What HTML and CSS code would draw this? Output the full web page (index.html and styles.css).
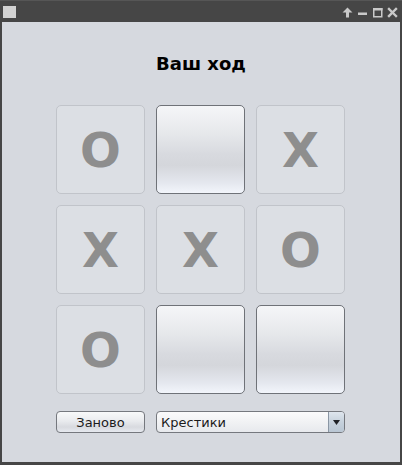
FILE: index.html
```html
<!DOCTYPE html>
<html lang="ru">
<head>
<meta charset="utf-8">
<title>Крестики-нолики</title>
<link rel="stylesheet" href="styles.css">
</head>
<body>
<div class="window">
  <div class="titlebar">
    <div class="app-icon"></div>
    <div class="controls">
      <svg class="ctl" width="11" height="11" viewBox="0 0 11 11"><path d="M5.5 0.5 L10.5 5.5 L7 5.5 L7 10.5 L4 10.5 L4 5.5 L0.5 5.5 Z" fill="#c9c9c9"/></svg>
      <svg class="ctl" width="11" height="11" viewBox="0 0 11 11"><rect x="1" y="5.5" width="9" height="2.5" fill="#c9c9c9"/></svg>
      <svg class="ctl" width="11" height="11" viewBox="0 0 11 11"><rect x="1.75" y="1.75" width="8" height="8" fill="none" stroke="#c9c9c9" stroke-width="1.5"/><rect x="1" y="1" width="9.5" height="2.5" fill="#c9c9c9"/></svg>
      <svg class="ctl" width="11" height="11" viewBox="0 0 11 11"><path d="M2 2 L9 9 M9 2 L2 9" stroke="#c9c9c9" stroke-width="2.4" stroke-linecap="square"/></svg>
    </div>
  </div>
  <div class="content">
    <div class="status">Ваш ход</div>
    <div class="board">
      <button class="cell used" disabled>O</button>
      <button class="cell"></button>
      <button class="cell used" disabled>X</button>
      <button class="cell used" disabled>X</button>
      <button class="cell used" disabled>X</button>
      <button class="cell used" disabled>O</button>
      <button class="cell used" disabled>O</button>
      <button class="cell"></button>
      <button class="cell"></button>
    </div>
    <div class="bottom">
      <button class="btn">Заново</button>
      <div class="combo">
        <span class="combo-text">Крестики</span>
        <span class="combo-arrow"><svg width="7" height="5" viewBox="0 0 7 5"><path d="M0 0 L7 0 L3.5 5 Z" fill="#1e2126"/></svg></span>
      </div>
    </div>
  </div>
</div>
</body>
</html>
```

FILE: styles.css
```css
html, body {
  margin: 0;
  padding: 0;
}
body {
  width: 402px;
  height: 465px;
  overflow: hidden;
  font-family: "DejaVu Sans", "Liberation Sans", sans-serif;
}
.window {
  width: 402px;
  height: 465px;
  box-sizing: border-box;
  background: #464646;
  border-top: 1px solid #565656;
  padding: 0 2px 3px 2px;
  display: flex;
  flex-direction: column;
}
.titlebar {
  height: 21px;
  display: flex;
  align-items: center;
  justify-content: space-between;
  flex: none;
}
.app-icon {
  width: 13px;
  height: 12px;
  background: #d2d2d2;
  margin-left: 1px;
  margin-top: 1px;
}
.controls {
  display: flex;
  gap: 4px;
  margin-right: 2px;
  margin-top: 1px;
}
.ctl {
  display: block;
}
.content {
  flex: 1;
  background: #d6d9df;
  display: flex;
  flex-direction: column;
  align-items: center;
}
.status {
  margin-top: 31px;
  height: 22px;
  line-height: 22px;
  font-size: 18px;
  font-weight: bold;
  color: #000;
}
.board {
  margin-top: 30px;
  margin-right: 1px;
  display: grid;
  grid-template-columns: repeat(3, 89px);
  grid-template-rows: repeat(3, 89px);
  gap: 11px;
}
.cell {
  box-sizing: border-box;
  width: 89px;
  height: 89px;
  margin: 0;
  padding: 0;
  border: 1px solid #6f7278;
  border-radius: 5px;
  background: linear-gradient(to bottom, #f5f6f8 0%, #e7e9ec 30%, #d8dadf 55%, #d4d6db 68%, #e4e7ee 88%, #f2f5fb 100%);
  font-family: "DejaVu Sans", sans-serif;
  font-weight: bold;
  font-size: 48px;
  color: #8e8e8e;
  line-height: 1;
}
.cell.used {
  background: #dcdfe4;
  border-color: #c1c4ca;
  color: #8e8e8e;
}
.bottom {
  margin-top: 17px;
  margin-right: 1px;
  display: flex;
  gap: 11px;
}
.btn {
  box-sizing: border-box;
  width: 89px;
  height: 22px;
  margin: 0;
  padding: 0;
  border: 1px solid #75787e;
  border-radius: 4px;
  background: linear-gradient(to bottom, #f8f9fa 0%, #e9ebee 45%, #d8dadf 75%, #e6e9ef 100%);
  font-family: "DejaVu Sans", sans-serif;
  font-size: 13px;
  color: #1b1b1b;
}
.combo {
  box-sizing: border-box;
  width: 189px;
  height: 22px;
  border: 1px solid #75787e;
  border-radius: 4px;
  background: linear-gradient(to bottom, #fbfbfc 0%, #f1f2f4 50%, #e7e9ed 100%);
  display: flex;
  align-items: center;
  overflow: hidden;
}
.combo-text {
  flex: 1;
  padding-left: 4px;
  font-size: 13px;
  color: #1b1b1b;
}
.combo-arrow {
  width: 15px;
  height: 100%;
  border-left: 1px solid #8a96a4;
  background: linear-gradient(to bottom, #dfe6ee 0%, #c6d1dc 50%, #b9c6d3 100%);
  display: flex;
  align-items: center;
  justify-content: center;
}
```
